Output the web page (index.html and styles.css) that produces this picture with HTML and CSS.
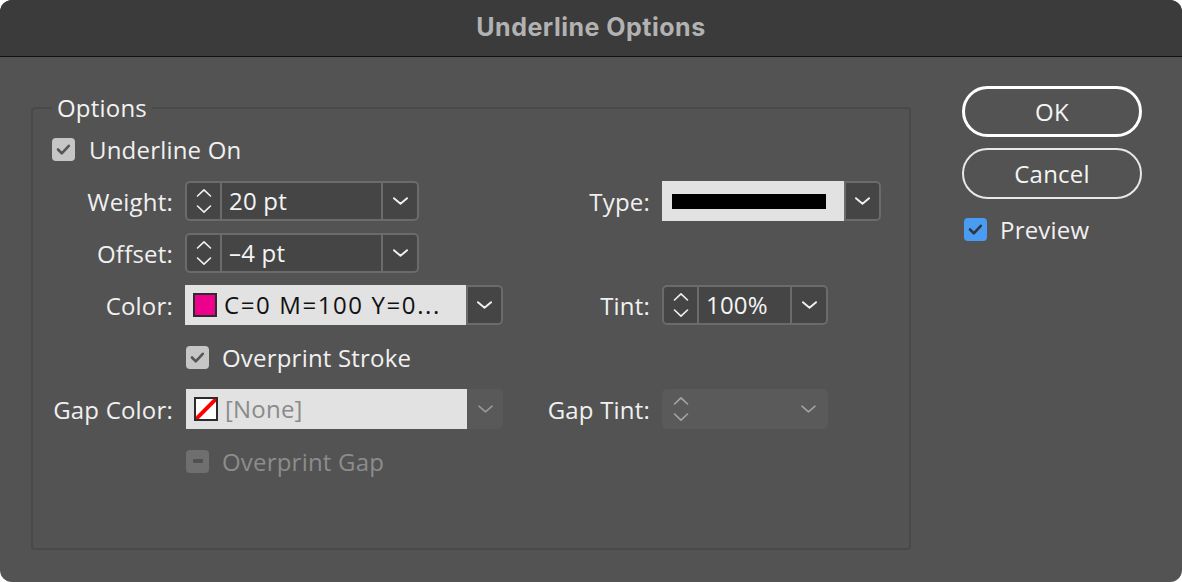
FILE: index.html
```html
<!DOCTYPE html>
<html lang="en">
<head>
<meta charset="utf-8">
<title>Underline Options</title>
<link rel="stylesheet" href="styles.css">
</head>
<body>
<div class="window">
  <div class="titlebar">Underline Options</div>
  <div class="content">
    <fieldset class="group">
      <legend>Options</legend>
      <div class="form">
        <label class="check row-all">
          <span class="box box-on"><svg viewBox="0 0 23 23"><path d="M6 11.5 L9.8 15.3 L16.8 7.8"/></svg></span>
          <span>Underline On</span>
        </label>

        <span class="lbl c1">Weight:</span>
        <div class="field spin-combo c2 w-short">
          <span class="spin"><svg viewBox="0 0 16 26"><path d="M1.5 8 L8 1.8 L14.5 8"/><path d="M1.5 18 L8 24.2 L14.5 18"/></svg></span>
          <span class="val">20 pt</span>
          <span class="dd"><svg viewBox="0 0 16 8"><path d="M1 1 L8 7 L15 1"/></svg></span>
        </div>
        <span class="lbl c3">Type:</span>
        <div class="field light-combo c4">
          <span class="light"><span class="stroke-bar"></span></span>
          <span class="dd boxed"><svg viewBox="0 0 16 8"><path d="M1 1 L8 7 L15 1"/></svg></span>
        </div>

        <span class="lbl c1">Offset:</span>
        <div class="field spin-combo c2 w-short">
          <span class="spin"><svg viewBox="0 0 16 26"><path d="M1.5 8 L8 1.8 L14.5 8"/><path d="M1.5 18 L8 24.2 L14.5 18"/></svg></span>
          <span class="val">–4 pt</span>
          <span class="dd"><svg viewBox="0 0 16 8"><path d="M1 1 L8 7 L15 1"/></svg></span>
        </div>

        <span class="lbl c1">Color:</span>
        <div class="field light-combo c2">
          <span class="light"><span class="swatch swatch-magenta"></span><span class="light-text wide">C=0 M=100 Y=0...</span></span>
          <span class="dd boxed"><svg viewBox="0 0 16 8"><path d="M1 1 L8 7 L15 1"/></svg></span>
        </div>
        <span class="lbl c3">Tint:</span>
        <div class="field spin-combo c4 w-tint">
          <span class="spin"><svg viewBox="0 0 16 26"><path d="M1.5 8 L8 1.8 L14.5 8"/><path d="M1.5 18 L8 24.2 L14.5 18"/></svg></span>
          <span class="val">100%</span>
          <span class="dd"><svg viewBox="0 0 16 8"><path d="M1 1 L8 7 L15 1"/></svg></span>
        </div>

        <label class="check c2 check-inner">
          <span class="box box-on"><svg viewBox="0 0 23 23"><path d="M6 11.5 L9.8 15.3 L16.8 7.8"/></svg></span>
          <span>Overprint Stroke</span>
        </label>

        <span class="lbl c1">Gap Color:</span>
        <div class="field light-combo disabled c2">
          <span class="light"><span class="swatch swatch-none"><svg viewBox="0 0 20 20" preserveAspectRatio="none"><path d="M0 20 L20 0"/></svg></span><span class="light-text muted">[None]</span></span>
          <span class="dd"><svg viewBox="0 0 16 8"><path d="M1 1 L8 7 L15 1"/></svg></span>
        </div>
        <span class="lbl c3">Gap Tint:</span>
        <div class="field spin-combo disabled c4 w-tint">
          <span class="spin"><svg viewBox="0 0 16 26"><path d="M1.5 8 L8 1.8 L14.5 8"/><path d="M1.5 18 L8 24.2 L14.5 18"/></svg></span>
          <span class="val"></span>
          <span class="dd"><svg viewBox="0 0 16 8"><path d="M1 1 L8 7 L15 1"/></svg></span>
        </div>

        <label class="check c2 check-inner check-disabled">
          <span class="box box-mixed"><span class="dash"></span></span>
          <span>Overprint Gap</span>
        </label>
      </div>
    </fieldset>

    <div class="actions">
      <button class="btn btn-default" type="button">OK</button>
      <button class="btn" type="button">Cancel</button>
      <label class="check preview">
        <span class="box box-blue"><svg viewBox="0 0 23 23"><path d="M6 11.5 L9.8 15.3 L16.8 7.8"/></svg></span>
        <span>Preview</span>
      </label>
    </div>
  </div>
</div>
</body>
</html>
```
FILE: styles.css
```css
html, body {
  margin: 0;
  padding: 0;
  background: #ffffff;
}

body {
  font-family: "Open Sans", "Noto Sans", "Liberation Sans", sans-serif;
  font-size: 24px;
  letter-spacing: 0.2px;
  color: #f0f0f0;
}

.window {
  width: 1182px;
  height: 582px;
  background: #535353;
  border-radius: 12px;
  overflow: hidden;
  display: flex;
  flex-direction: column;
}

.titlebar {
  height: 56px;
  flex: none;
  background: #3b3b3b;
  border-bottom: 1px solid #111111;
  color: #b2b2b2;
  font-family: "Inter", "Liberation Sans", sans-serif;
  font-weight: 700;
  font-size: 25px;
  letter-spacing: 0.5px;
  line-height: 54px;
  text-align: center;
}

.content {
  flex: 1;
  display: flex;
  align-items: flex-start;
}

/* group box */
.group {
  margin: 38px 0 0 31px;
  padding: 0;
  width: 880px;
  height: 455px;
  box-sizing: border-box;
  border: 2px solid #494949;
  border-radius: 4px;
  min-width: 0;
}

.group legend {
  margin-left: 19px;
  padding: 0 5px;
  font-size: 24px;
  line-height: 26px;
  color: #f2f2f2;
}

.form {
  display: grid;
  grid-template-columns: 140px 318px 135px 219px;
  grid-auto-rows: 40px;
  column-gap: 12px;
  row-gap: 12px;
  align-items: center;
  padding-top: 8px;
}

.c1 { grid-column: 1; }
.c2 { grid-column: 2; }
.c3 { grid-column: 3; }
.c4 { grid-column: 4; }
.row-all { grid-column: 1 / -1; padding-left: 19px; }

.lbl {
  text-align: right;
  white-space: nowrap;
}

/* checkbox */
.check {
  display: flex;
  align-items: center;
  gap: 14px;
  white-space: nowrap;
}

.check-inner { padding-left: 1px; gap: 13px; }

.box {
  width: 23px;
  height: 23px;
  border-radius: 4px;
  flex: none;
  display: flex;
  align-items: center;
  justify-content: center;
}

.box svg {
  width: 23px;
  height: 23px;
  fill: none;
  stroke-width: 2.6;
  stroke-linecap: round;
  stroke-linejoin: round;
}

.box-on { background: #c6c6c6; }
.box-on svg { stroke: #555555; }

.box-blue { background: #4a9bf2; }
.box-blue svg { stroke: #2f3640; }

.box-mixed { background: #6f6f6f; }
.dash {
  width: 10px;
  height: 4px;
  background: #505050;
  border-radius: 1px;
}

.check-disabled { color: #8c8c8c; }

/* fields */
.field {
  height: 40px;
  box-sizing: border-box;
  display: flex;
}

.w-short { width: 234px; }
.w-tint { width: 166px; }

.spin-combo {
  border: 2px solid #6b6b6b;
  border-radius: 5px;
  background: #454545;
}

.spin {
  width: 33px;
  flex: none;
  border-right: 2px solid #6b6b6b;
  display: flex;
  align-items: center;
  justify-content: center;
}

.spin svg {
  width: 16px;
  height: 26px;
  fill: none;
  stroke: #f0f0f0;
  stroke-width: 1.6;
  stroke-linecap: round;
  stroke-linejoin: round;
}

.val {
  flex: 1;
  padding-left: 7px;
  line-height: 36px;
  color: #f4f4f4;
  white-space: nowrap;
}

.dd {
  width: 34px;
  flex: none;
  border-left: 2px solid #6b6b6b;
  display: flex;
  align-items: center;
  justify-content: center;
}

.dd svg {
  width: 15px;
  height: 8px;
  fill: none;
  stroke: #f0f0f0;
  stroke-width: 2;
  stroke-linecap: round;
  stroke-linejoin: round;
}

.light-combo .light {
  flex: 1;
  background: #e2e2e2;
  display: flex;
  align-items: center;
  padding-left: 8px;
  gap: 7px;
  color: #111111;
  white-space: nowrap;
  overflow: hidden;
}

.light-combo .dd.boxed {
  width: 33px;
  background: #454545;
  border: 2px solid #6b6b6b;
  border-radius: 0 5px 5px 0;
}

.stroke-bar {
  width: 154px;
  height: 15px;
  background: #000000;
  margin-left: 2px;
}

.swatch {
  width: 24px;
  height: 24px;
  box-sizing: border-box;
  border: 2px solid #2c2c2c;
  flex: none;
  display: flex;
}

.swatch-magenta { background: #ec008c; }

.swatch-none { background: #ffffff; }
.swatch-none svg {
  width: 20px;
  height: 20px;
  stroke: #ff0000;
  stroke-width: 4;
}

.light-text { line-height: 36px; }
.light-text.wide { letter-spacing: 1.6px; }
.muted { color: #8a8a8a; }

.disabled .dd {
  width: 36px;
  border-left: none;
  background: #595959;
  border-radius: 0 5px 5px 0;
}
.disabled .dd svg { stroke: #9b9b9b; stroke-width: 1.6; }

.spin-combo.disabled {
  background: #5a5a5a;
  border-color: #5a5a5a;
}
.spin-combo.disabled .spin,
.spin-combo.disabled .dd {
  border-color: #5a5a5a;
  background: transparent;
}
.spin-combo.disabled svg { stroke: #a5a5a5; }

.light-combo.disabled .light { margin-left: 1px; }

/* buttons */
.actions {
  margin: 29px 0 0 51px;
  width: 180px;
  display: flex;
  flex-direction: column;
}

.btn {
  height: 51px;
  box-sizing: border-box;
  border-radius: 26px;
  background: transparent;
  color: #f4f4f4;
  font-family: inherit;
  font-size: 24px;
  letter-spacing: 0.2px;
  border: 2px solid #e8e8e8;
  padding: 0;
}

.btn-default {
  border: 3px solid #ffffff;
  margin-bottom: 11px;
}

.preview {
  margin-top: 18px;
  padding-left: 2px;
  gap: 13px;
  height: 24px;
}
```
